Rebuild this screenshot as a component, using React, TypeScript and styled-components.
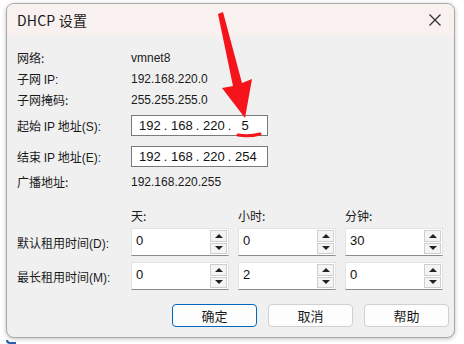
import React from "react";
import styled, { createGlobalStyle } from "styled-components";

const Global = createGlobalStyle`
  html, body { margin: 0; padding: 0; background: #ffffff; }
  body { font-family: "Noto Sans CJK SC", "Noto Sans", sans-serif; font-size: 12px; color: #1a1a1a; }
`;

const Page = styled.div`
  position: relative;
  width: 464px;
  height: 344px;
  overflow: hidden;
  background: #ffffff;
`;

const Dialog = styled.div`
  margin: 3px 0 0 6px;
  width: 449px;
  height: 335px;
  box-sizing: border-box;
  border: 1px solid #a8a8a8;
  border-radius: 8px;
  overflow: hidden;
  display: flex;
  flex-direction: column;
  background: #f0f0f0;
  box-shadow: 0 1px 4px rgba(0, 0, 0, 0.25);
`;

const TitleBar = styled.div`
  height: 32px;
  flex: none;
  display: flex;
  align-items: center;
  justify-content: space-between;
  padding: 0 12px 0 10px;
  background: #f8f1f0;
`;

const Title = styled.span`
  font-size: 14px;
  color: #1b1b1b;
  letter-spacing: 0.2px;
`;

const Body = styled.div`
  flex: 1;
  display: flex;
  flex-direction: column;
  padding: 11px 0 0 10px;
`;

const Row = styled.div<{ $h: number; $mt?: number }>`
  display: grid;
  grid-template-columns: 114px 1fr;
  align-items: center;
  height: ${(p) => p.$h}px;
  margin-top: ${(p) => p.$mt ?? 0}px;
`;

const Label = styled.span`
  font-size: 12px;
  color: #1a1a1a;
  white-space: nowrap;
`;

const Latin = styled.span`
  font-family: "Liberation Sans", Arial, sans-serif;
  font-size: 12px;
`;

const Value = styled.span`
  font-family: "Liberation Sans", Arial, sans-serif;
  font-size: 12px;
  color: #1a1a1a;
`;

const IpBox = styled.div`
  width: 137px;
  height: 21px;
  box-sizing: border-box;
  border: 1px solid #7a7a7a;
  background: #ffffff;
  display: flex;
  align-items: center;
  padding-left: 7px;
  font-family: "Liberation Sans", Arial, sans-serif;
  font-size: 13px;
  color: #111;
`;

const Octet = styled.span`
  width: 20px;
  text-align: center;
`;

const Dot = styled.span`
  width: 12px;
  text-align: center;
  padding-left: 1px;
  box-sizing: border-box;
`;

const HeaderRow = styled.div`
  display: grid;
  grid-template-columns: 114px 107px 107px 107px;
  align-items: center;
  height: 16px;
  margin-top: 15px;
`;

const SpinRow = styled.div<{ $mt: number }>`
  display: grid;
  grid-template-columns: 114px 107px 107px 107px;
  align-items: center;
  height: 28px;
  margin-top: ${(p) => p.$mt}px;
`;

const Spin = styled.div`
  width: 98px;
  height: 28px;
  box-sizing: border-box;
  background: #ffffff;
  border: 1px solid #e3e3e3;
  border-bottom: 1px solid #8a8a8a;
  display: flex;
  justify-content: space-between;
  padding: 1px 1px 1px 4px;
`;

const SpinValue = styled.span`
  font-family: "Liberation Sans", Arial, sans-serif;
  font-size: 13px;
  color: #111;
  line-height: 16px;
  padding-top: 3px;
`;

const Arrows = styled.div`
  display: flex;
  flex-direction: column;
  gap: 1px;
  width: 17px;
`;

const ArrowBtn = styled.div`
  flex: 1;
  box-sizing: border-box;
  border: 1px solid #cfcfcf;
  background: #f4f4f4;
  display: flex;
  align-items: center;
  justify-content: center;
`;

const Tri = styled.div<{ $up: boolean }>`
  width: 0;
  height: 0;
  border-left: 4px solid transparent;
  border-right: 4px solid transparent;
  ${(p) => (p.$up ? "border-bottom: 4px solid #222;" : "border-top: 4px solid #222;")}
`;

const Buttons = styled.div`
  display: flex;
  justify-content: flex-end;
  gap: 11px;
  margin-top: 14px;
  padding-right: 5px;
`;

const Btn = styled.div<{ $primary?: boolean }>`
  width: 85px;
  height: 23px;
  box-sizing: border-box;
  border-radius: 4px;
  border: 1px solid ${(p) => (p.$primary ? "#0067c0" : "#d0d0d0")};
  background: #fdfdfd;
  display: flex;
  align-items: center;
  justify-content: center;
  font-size: 13px;
  color: #1a1a1a;
`;

const Overlay = styled.svg`
  position: absolute;
  left: 0;
  top: 0;
  pointer-events: none;
`;

const Corner = styled.div`
  position: absolute;
  left: 6px;
  bottom: 0;
  width: 10px;
  height: 4px;
  border-left: 2px solid #2a5fb0;
  border-bottom: 2px solid #2a5fb0;
  border-bottom-left-radius: 6px;
  box-sizing: border-box;
`;

const Ip = ({ parts }: { parts: string[] }) => (
  <IpBox>
    {parts.map((p, i) => (
      <React.Fragment key={i}>
        <Octet>{p}</Octet>
        {i < parts.length - 1 && <Dot>.</Dot>}
      </React.Fragment>
    ))}
  </IpBox>
);

const SpinBox = ({ v }: { v: string }) => (
  <Spin>
    <SpinValue>{v}</SpinValue>
    <Arrows>
      <ArrowBtn>
        <Tri $up />
      </ArrowBtn>
      <ArrowBtn>
        <Tri $up={false} />
      </ArrowBtn>
    </Arrows>
  </Spin>
);

export default function App() {
  return (
    <Page>
      <Global />
      <Dialog>
        <TitleBar>
          <Title>DHCP 设置</Title>
          <svg width="14" height="14" viewBox="0 0 14 14">
            <path d="M1.5 1.5 L12.5 12.5 M12.5 1.5 L1.5 12.5" stroke="#333" strokeWidth="1.3" />
          </svg>
        </TitleBar>
        <Body>
          <Row $h={21}>
            <Label>网络:</Label>
            <Value>vmnet8</Value>
          </Row>
          <Row $h={21}>
            <Label>
              子网 <Latin>IP:</Latin>
            </Label>
            <Value>192.168.220.0</Value>
          </Row>
          <Row $h={21}>
            <Label>子网掩码:</Label>
            <Value>255.255.255.0</Value>
          </Row>
          <Row $h={21} $mt={5}>
            <Label>
              起始 <Latin>IP</Latin> 地址<Latin>(S):</Latin>
            </Label>
            <Ip parts={["192", "168", "220", "5"]} />
          </Row>
          <Row $h={21} $mt={10}>
            <Label>
              结束 <Latin>IP</Latin> 地址<Latin>(E):</Latin>
            </Label>
            <Ip parts={["192", "168", "220", "254"]} />
          </Row>
          <Row $h={21} $mt={4}>
            <Label>广播地址:</Label>
            <Value>192.168.220.255</Value>
          </Row>
          <HeaderRow>
            <span />
            <Label>天:</Label>
            <Label>小时:</Label>
            <Label>分钟:</Label>
          </HeaderRow>
          <SpinRow $mt={5}>
            <Label>
              默认租用时间<Latin>(D):</Latin>
            </Label>
            <SpinBox v="0" />
            <SpinBox v="0" />
            <SpinBox v="30" />
          </SpinRow>
          <SpinRow $mt={6}>
            <Label>
              最长租用时间<Latin>(M):</Latin>
            </Label>
            <SpinBox v="0" />
            <SpinBox v="2" />
            <SpinBox v="0" />
          </SpinRow>
          <Buttons>
            <Btn $primary>确定</Btn>
            <Btn>取消</Btn>
            <Btn>帮助</Btn>
          </Buttons>
        </Body>
      </Dialog>
      <Corner />
      <Overlay width="464" height="344" viewBox="0 0 464 344">
        <polygon
          points="218,14 223,12 242,83 252,79 245,118 222,88 233,86"
          fill="#f5141b"
        />
        <path d="M238 135 Q249 137 260 134" stroke="#f5141b" strokeWidth="3" strokeLinecap="round" fill="none" />
      </Overlay>
    </Page>
  );
}
